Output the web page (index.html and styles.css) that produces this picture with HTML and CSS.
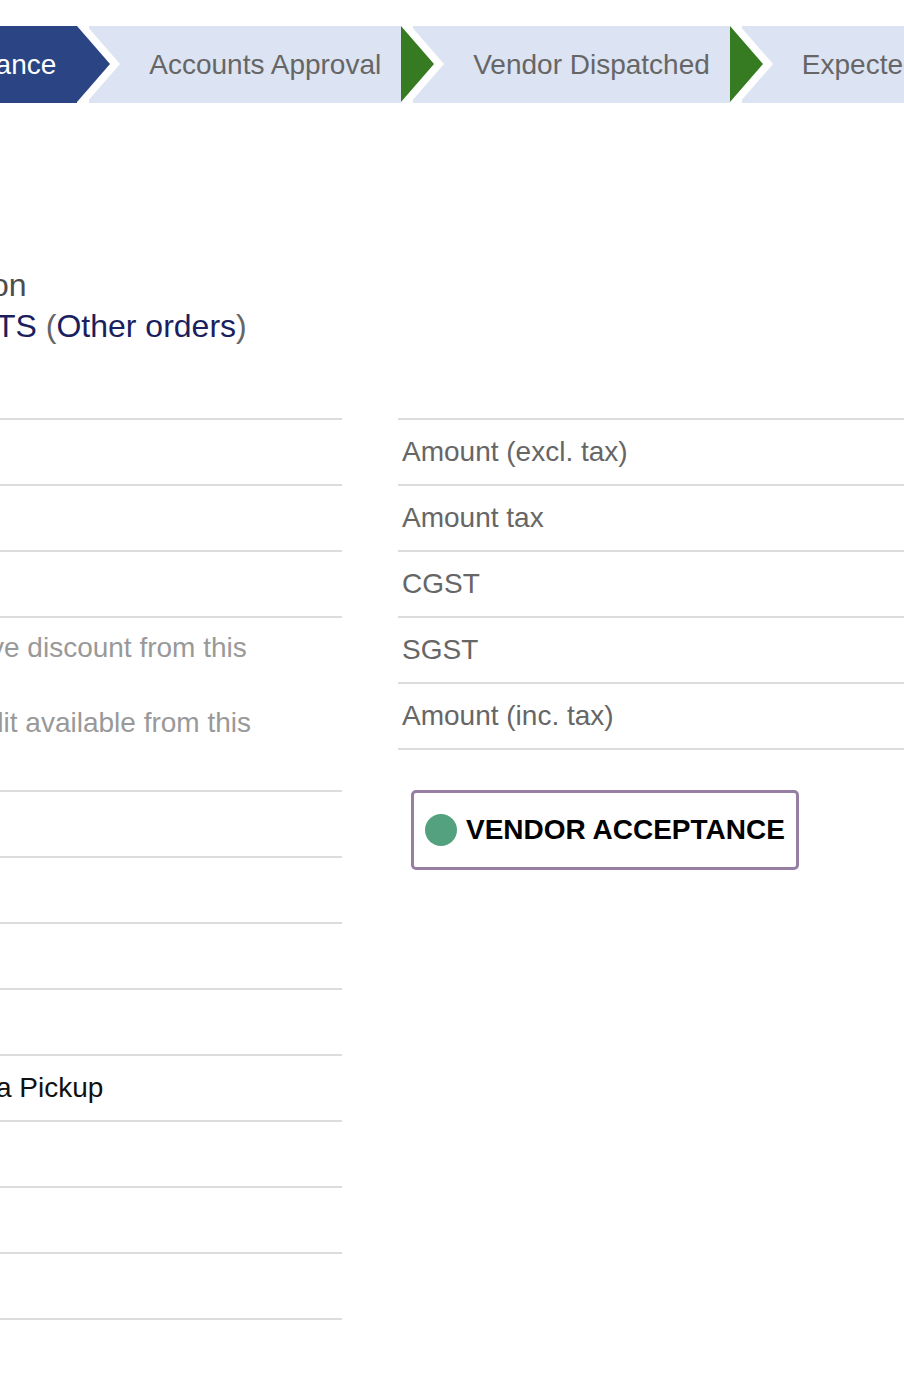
FILE: index.html
```
<!DOCTYPE html>
<html lang="en">
<head>
<meta charset="utf-8">
<title>Purchase Order</title>
<link rel="stylesheet" href="styles.css">
</head>
<body>
<div class="page">
  <div class="statusbar">
    <div class="step active">Vendor Acceptance</div>
    <div class="step">Accounts Approval</div>
    <div class="step">Vendor Dispatched</div>
    <div class="step">Expected Delivery</div>
  </div>

  <div class="title">
    <div class="title-line muted cut-9">on</div>
    <div class="title-line link cut-4">TS <span class="paren">(</span>Other orders<span class="paren">)</span></div>
  </div>

  <div class="groups">
    <div class="group group-left">
      <div class="row"></div>
      <div class="row"></div>
      <div class="row"></div>
      <div class="row tall">
        <div class="tall-line first light cut-10">ve discount from this</div>
        <div class="tall-line second light cut-12">dit available from this</div>
      </div>
      <div class="row"></div>
      <div class="row"></div>
      <div class="row"></div>
      <div class="row"></div>
      <div class="row dark cut-4">a Pickup</div>
      <div class="row"></div>
      <div class="row"></div>
      <div class="row"></div>
    </div>

    <div class="group group-right">
      <div class="rows">
        <div class="row label">Amount (excl. tax)</div>
        <div class="row label">Amount tax</div>
        <div class="row label">CGST</div>
        <div class="row label">SGST</div>
        <div class="row label">Amount (inc. tax)</div>
      </div>
      <div class="actions">
        <button class="state-btn" type="button"><span class="dot"></span>VENDOR ACCEPTANCE</button>
      </div>
    </div>
  </div>
</div>
</body>
</html>
```

FILE: styles.css
```
html, body {
  margin: 0;
  padding: 0;
  background: #ffffff;
}

body {
  overflow: hidden;
  font-family: "Liberation Sans", Arial, Helvetica, sans-serif;
  font-size: 28px;
  color: #666666;
}

.page {
  padding-top: 26px;
}

/* ---------- status bar ---------- */
.statusbar {
  display: flex;
  gap: 12px;
  height: 77px;
}

.step {
  position: relative;
  flex: none;
  background: #dce3f2;
  color: #666666;
  padding: 0 20px 0 60px;
  line-height: 77px;
  white-space: nowrap;
}

.step::before,
.step::after {
  content: "";
  position: absolute;
  top: 0;
  width: 0;
  height: 0;
  border-top: 38.5px solid transparent;
  border-bottom: 38.5px solid transparent;
}

.step::before {
  left: calc(100% + 10px);
  border-left: 33px solid #ffffff;
  z-index: 1;
}

.step::after {
  left: 100%;
  border-left: 33px solid #367a21;
  z-index: 2;
}

.step.active {
  background: #2b4483;
  color: #ffffff;
  margin-left: -245px;
  padding-right: 21px;
}

.step.active::after {
  border-left-color: #2b4483;
}

/* ---------- title ---------- */
.title {
  margin-top: 162px;
  font-size: 32px;
  line-height: 41px;
  white-space: nowrap;
}

.muted {
  color: #4d4d4d;
}

.link {
  color: #1b1f5e;
}

.paren {
  color: #666666;
}

.cut-4 { text-indent: -4px; }
.cut-9 { text-indent: -9px; }
.cut-10 { text-indent: -10px; }
.cut-12 { text-indent: -12px; }

/* ---------- groups ---------- */
.groups {
  display: flex;
  gap: 56px;
  margin-top: 71px;
}

.group-left {
  flex: none;
  width: 342px;
}

.group-right {
  flex: 1;
  min-width: 0;
}

.row {
  display: flex;
  align-items: center;
  height: 64px;
  border-top: 2px solid #dcdcdc;
  white-space: nowrap;
}

.group-left > .row:last-child,
.rows > .row:last-child {
  border-bottom: 2px solid #dcdcdc;
}

.row.label {
  padding-left: 4px;
  color: #666666;
}

.row.dark {
  color: #111111;
}

.row.tall {
  display: block;
  height: auto;
  padding: 12px 0 49px;
}

.tall-line {
  line-height: 36px;
}

.tall-line.second {
  margin-top: 39px;
}

.light {
  color: #999999;
}

/* ---------- button ---------- */
.actions {
  margin-top: 40px;
  margin-left: 13px;
}

.state-btn {
  display: inline-flex;
  align-items: center;
  gap: 9px;
  height: 80px;
  box-sizing: border-box;
  padding: 0 11px;
  border: 3px solid #977ea3;
  border-radius: 5px;
  background: #ffffff;
  font-family: "Liberation Sans", Arial, Helvetica, sans-serif;
  font-size: 28px;
  font-weight: bold;
  color: #000000;
  white-space: nowrap;
  cursor: pointer;
}

.dot {
  display: block;
  width: 32px;
  height: 32px;
  border-radius: 50%;
  background: #53a17f;
}
```
